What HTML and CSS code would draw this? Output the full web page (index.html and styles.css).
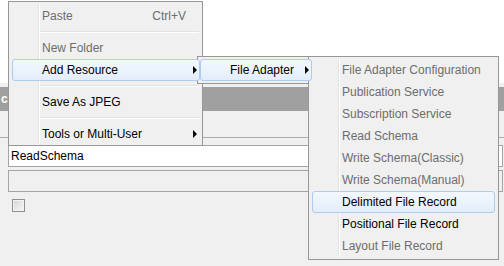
FILE: index.html
```html
<!DOCTYPE html>
<html lang="en">
<head>
    <meta charset="UTF-8">
    <title>Add Resource Menu</title>
    <link rel="stylesheet" href="styles.css">
</head>
<body>
    <div class="screen">
        <div class="top"></div>
        <div class="panel">
            <div class="titlebar">c</div>
            <div class="rule"></div>
            <div class="field field-edit">ReadSchema</div>
            <div class="field"></div>
            <span class="checkbox"></span>
        </div>
    </div>

    <!-- context menu -->
    <div class="menu menu-main">
        <div class="item disabled"><span>Paste</span><span class="shortcut">Ctrl+V</span></div>
        <div class="sep"></div>
        <div class="item disabled"><span>New Folder</span></div>
        <div class="item active"><span>Add Resource</span><span class="arrow"></span></div>
        <div class="sep"></div>
        <div class="item"><span>Save As JPEG</span></div>
        <div class="sep"></div>
        <div class="item"><span>Tools or Multi-User</span><span class="arrow"></span></div>
    </div>

    <div class="menu menu-adapter">
        <div class="item disabled"><span>File Adapter Configuration</span></div>
        <div class="item disabled"><span>Publication Service</span></div>
        <div class="item disabled"><span>Subscription Service</span></div>
        <div class="item disabled"><span>Read Schema</span></div>
        <div class="item disabled"><span>Write Schema(Classic)</span></div>
        <div class="item disabled"><span>Write Schema(Manual)</span></div>
        <div class="item active"><span>Delimited File Record</span></div>
        <div class="item"><span>Positional File Record</span></div>
        <div class="item disabled"><span>Layout File Record</span></div>
    </div>

    <div class="menu menu-file">
        <div class="item active"><span>File Adapter</span><span class="arrow"></span></div>
    </div>
</body>
</html>
```

FILE: styles.css
```css
body {
    margin: 0;
    font-family: 'Liberation Sans', Arial, sans-serif;
    font-size: 12px;
    color: #000;
}

.screen {
    width: 504px;
    height: 266px;
    overflow: hidden;
    background-color: #f0f0f0;
}

.top {
    height: 83px;
    background-color: #fff;
}

.panel {
    padding-top: 4px;
}

.titlebar {
    height: 24px;
    line-height: 24px;
    padding-left: 1px;
    background-color: #a0a0a0;
    color: #fff;
    font-weight: bold;
}

.rule {
    margin-top: 26px;
    height: 1px;
    background-color: #acacac;
}

.field {
    box-sizing: border-box;
    height: 22px;
    margin: 3px 1px 0 8px;
    border: 1px solid #a5a5a5;
    background-color: #f0f0f0;
}

.field-edit {
    margin-top: 7px;
    padding-left: 2px;
    line-height: 20px;
    background-color: #fff;
}

.checkbox {
    display: block;
    box-sizing: border-box;
    width: 13px;
    height: 13px;
    margin: 7px 0 0 12px;
    border: 1px solid #8f8f8f;
    box-shadow: inset 0 0 0 1px #f4f4f4;
    background: linear-gradient(135deg, #d4d4d4, #f9f9f9);
}

/* menus */
.menu {
    position: absolute;
    box-sizing: border-box;
    border: 1px solid #979797;
    background-color: #f0f0f0;
}

.menu::before {
    content: "";
    position: absolute;
    top: 2px;
    bottom: 2px;
    width: 1px;
    background-color: #e2e3e3;
    border-right: 1px solid #fff;
}

.menu-main {
    left: 8px;
    top: 1px;
    width: 195px;
    padding: 3px 2px 0 3px;
}

.menu-main::before {
    left: 29px;
}

.menu-file {
    left: 197px;
    top: 56px;
    width: 112px;
    padding: 2px 0 2px 2px;
}

.menu-file::before {
    left: 28px;
}

.menu-file .item {
    margin-right: -4px;
}

.menu-adapter {
    left: 308px;
    top: 56px;
    width: 191px;
    padding: 2px 3px 2px 3px;
}

.menu-adapter::before {
    left: 29px;
}

.item {
    box-sizing: border-box;
    height: 22px;
    display: flex;
    align-items: center;
    justify-content: space-between;
    padding: 0 2px 0 29px;
    border: 1px solid transparent;
    border-radius: 3px;
    white-space: nowrap;
}

.item.disabled {
    color: #6d6d6d;
}

.item.active {
    position: relative;
    z-index: 1;
    border-color: #aecbf0;
    background: linear-gradient(to bottom, #f3f8fe, #e3edfb);
}

.shortcut {
    margin-right: 11px;
}

.arrow {
    width: 0;
    height: 0;
    border-left: 4px solid #000;
    border-top: 4px solid transparent;
    border-bottom: 4px solid transparent;
}

.sep {
    height: 1px;
    margin: 4px 1px 4px 27px;
    background-color: #e2e3e3;
    border-bottom: 1px solid #fff;
}
```
